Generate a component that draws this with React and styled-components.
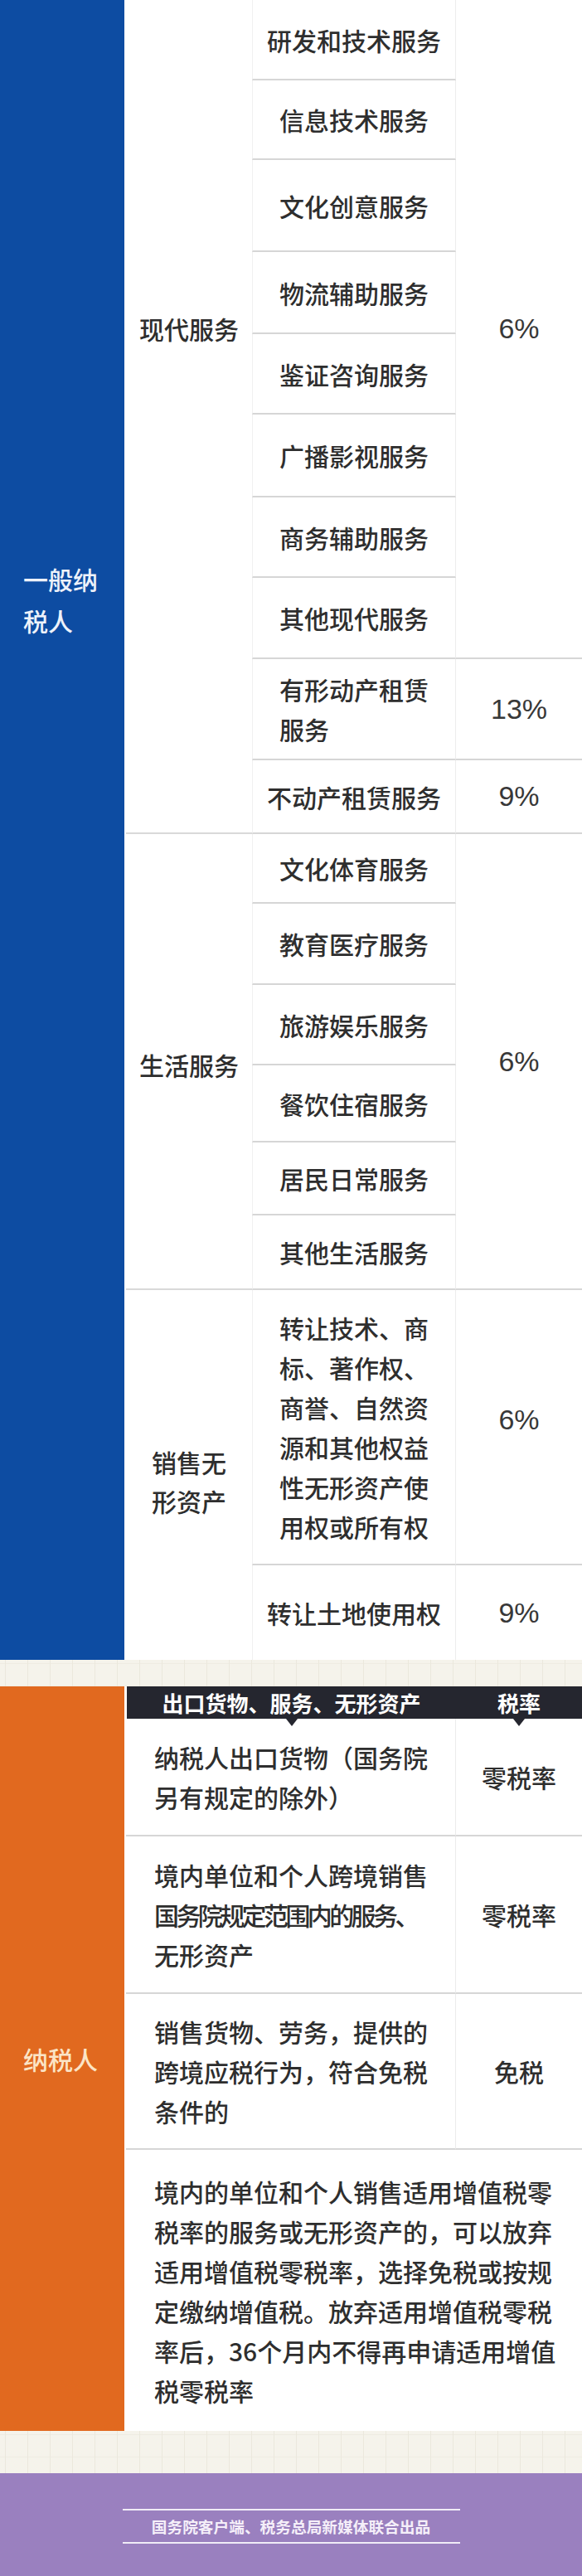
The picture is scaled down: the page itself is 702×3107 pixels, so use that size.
import React from 'react';
import styled, { createGlobalStyle } from 'styled-components';

const GlobalStyle = createGlobalStyle`
  *, *::before, *::after { box-sizing: border-box; }
  html, body { margin: 0; padding: 0; background: #ffffff; }
  body {
    font-family: "Noto Sans CJK SC", "Noto Sans", sans-serif;
    font-weight: 500;
    color: #2e2e2e;
  }
`;

const Page = styled.div`
  width: 702px;
  display: flex;
  flex-direction: column;
  background: #ffffff;
`;

const Table = styled.section`
  display: grid;
  grid-template-columns: ${(p) => p.$cols};
  grid-template-rows: ${(p) => p.$rows};
`;

const SideBand = styled.div`
  grid-column: 1;
  grid-row: 1 / -1;
  background: ${(p) => p.$bg};
  color: ${(p) => p.$fg};
  display: flex;
  flex-direction: column;
  justify-content: ${(p) => (p.$top != null ? 'flex-start' : 'center')};
  padding-top: ${(p) => p.$top || 0}px;
  padding-left: 28px;
  font-size: 30px;
  line-height: 50px;
`;

const Category = styled.div`
  grid-column: 2;
  grid-row: ${(p) => p.$span};
  display: flex;
  align-items: center;
  justify-content: center;
  text-align: center;
  padding-top: ${(p) => (p.$offset > 0 ? p.$offset * 2 : 0)}px;
  padding-bottom: ${(p) => (p.$offset < 0 ? -p.$offset * 2 : 0)}px;
  font-size: 30px;
  line-height: 47px;
  border-bottom: ${(p) => (p.$last ? 'none' : '2px solid #d9d9d9')};
  margin-left: 2px;
`;

const Item = styled.div`
  grid-column: 3;
  grid-row: ${(p) => p.$row};
  display: flex;
  align-items: center;
  justify-content: center;
  text-align: left;
  white-space: nowrap;
  font-size: 30px;
  line-height: 48px;
  border-left: 1px solid #f0f0f0;
  border-right: 1px solid #ededed;
  border-bottom: ${(p) => (p.$last ? 'none' : '2px solid #d6d6d6')};
`;

const Rate = styled.div`
  grid-column: 4;
  grid-row: ${(p) => p.$span};
  display: flex;
  align-items: center;
  justify-content: center;
  padding-bottom: ${(p) => (p.$offset < 0 ? -p.$offset * 2 : 0)}px;
  font-family: "Liberation Sans", Arial, sans-serif;
  font-weight: 400;
  font-size: 34px;
  color: #383838;
  border-bottom: ${(p) => (p.$last ? 'none' : '2px solid #d6d6d6')};
`;

const Paper = styled.div`
  height: ${(p) => p.$h}px;
  background-color: #f5f3eb;
  background-image:
    linear-gradient(90deg, #ebe8dd 1px, transparent 1px),
    linear-gradient(#efece2 1px, transparent 1px);
  background-size: 27px 27px;
  background-position: 6px 4px;
`;

const HeaderBar = styled.div`
  grid-column: 2 / 4;
  grid-row: 1;
  margin-left: 3px;
  background: #25262f;
  display: grid;
  grid-template-columns: 397px 1fr;
`;

const HeaderCell = styled.div`
  position: relative;
  display: flex;
  align-items: center;
  justify-content: center;
  color: #ffffff;
  font-size: 26px;
  font-weight: 700;
  line-height: 1;

  &::after {
    content: '';
    position: absolute;
    top: 100%;
    left: 50%;
    transform: translateX(-50%);
    border-left: 7px solid transparent;
    border-right: 7px solid transparent;
    border-top: 9px solid #25262f;
    z-index: 1;
  }
`;

const Desc = styled.div`
  grid-column: ${(p) => (p.$wide ? '2 / 4' : '2')};
  grid-row: ${(p) => p.$row};
  display: flex;
  align-items: center;
  padding-left: 34px;
  margin-left: 2px;
  white-space: nowrap;
  font-size: 30px;
  line-height: 48px;
  border-right: ${(p) => (p.$wide ? 'none' : '1px solid #ececec')};
  border-bottom: ${(p) => (p.$last ? 'none' : '2px solid #d6d6d6')};
`;

const Squeeze = styled.span`
  letter-spacing: -3.6px;
`;

const ExRate = styled.div`
  grid-column: 3;
  grid-row: ${(p) => p.$row};
  display: flex;
  align-items: center;
  justify-content: center;
  font-size: 30px;
  border-bottom: ${(p) => (p.$last ? 'none' : '2px solid #d6d6d6')};
`;

const Footer = styled.footer`
  height: 124px;
  background: #9a80bf;
  display: flex;
  justify-content: center;
  padding-top: 43px;
`;

const Credit = styled.div`
  width: 407px;
  height: 42px;
  border-top: 2px solid rgba(255, 255, 255, 0.85);
  border-bottom: 2px solid rgba(255, 255, 255, 0.85);
  display: flex;
  align-items: center;
  justify-content: center;
  color: #f5eff9;
  font-size: 18.7px;
  font-weight: 700;
  line-height: 1;
`;

const items = [
  { h: 97, lines: ['研发和技术服务'] },
  { h: 96, lines: ['信息技术服务'] },
  { h: 111, lines: ['文化创意服务'] },
  { h: 99, lines: ['物流辅助服务'] },
  { h: 97, lines: ['鉴证咨询服务'] },
  { h: 100, lines: ['广播影视服务'] },
  { h: 97, lines: ['商务辅助服务'] },
  { h: 98, lines: ['其他现代服务'] },
  { h: 122, lines: ['有形动产租赁', '服务'] },
  { h: 89, lines: ['不动产租赁服务'] },
  { h: 84, lines: ['文化体育服务'] },
  { h: 98, lines: ['教育医疗服务'] },
  { h: 97, lines: ['旅游娱乐服务'] },
  { h: 93, lines: ['餐饮住宿服务'] },
  { h: 88, lines: ['居民日常服务'] },
  { h: 90, lines: ['其他生活服务'] },
  {
    h: 332,
    lines: ['转让技术、商', '标、著作权、', '商誉、自然资', '源和其他权益', '性无形资产使', '用权或所有权'],
  },
  { h: 114, lines: ['转让土地使用权'] },
];

const categories = [
  { span: '1 / 11', lines: ['现代服务'], offset: -106 },
  { span: '11 / 17', lines: ['生活服务'], offset: 4 },
  { span: '17 / 19', lines: ['销售无', '形资产'], offset: 8, last: true },
];

const rates = [
  { span: '1 / 9', text: '6%' },
  { span: '9 / 10', text: '13%' },
  { span: '10 / 11', text: '9%' },
  { span: '11 / 17', text: '6%' },
  { span: '17 / 18', text: '6%', offset: -9 },
  { span: '18 / 19', text: '9%', last: true },
];

const Lines = ({ lines }) => (
  <div>
    {lines.map((l, i) => (
      <React.Fragment key={i}>
        {i > 0 && <br />}
        {l}
      </React.Fragment>
    ))}
  </div>
);

export default function App() {
  const rowTemplate = items.map((it) => `${it.h}px`).join(' ');
  return (
    <Page>
      <GlobalStyle />
      <Table $cols="150px 154px 246px 152px" $rows={rowTemplate}>
        <SideBand $bg="#0d4ca2" $fg="#eef2fa" $top={673}>
          <Lines lines={['一般纳', '税人']} />
        </SideBand>
        {categories.map((c) => (
          <Category key={c.span} $span={c.span} $offset={c.offset} $last={c.last}>
            <Lines lines={c.lines} />
          </Category>
        ))}
        {items.map((it, i) => (
          <Item key={i} $row={i + 1} $last={i === items.length - 1}>
            <Lines lines={it.lines} />
          </Item>
        ))}
        {rates.map((r) => (
          <Rate key={r.span} $span={r.span} $offset={r.offset || 0} $last={r.last}>
            {r.text}
          </Rate>
        ))}
      </Table>

      <Paper $h={32} />

      <Table $cols="150px 400px 152px" $rows="39px 142px 190px 188px 339px">
        <SideBand $bg="#e1691f" $fg="#fbe4c6">
          <div>纳税人</div>
        </SideBand>
        <HeaderBar>
          <HeaderCell>出口货物、服务、无形资产</HeaderCell>
          <HeaderCell>税率</HeaderCell>
        </HeaderBar>

        <Desc $row={2}>
          <div>
            纳税人出口货物（国务院
            <br />
            另有规定的除外）
          </div>
        </Desc>
        <ExRate $row={2}>零税率</ExRate>

        <Desc $row={3}>
          <div>
            境内单位和个人跨境销售
            <br />
            <Squeeze>国务院规定范围内的服务、</Squeeze>
            <br />
            无形资产
          </div>
        </Desc>
        <ExRate $row={3}>零税率</ExRate>

        <Desc $row={4}>
          <Lines lines={['销售货物、劳务，提供的', '跨境应税行为，符合免税', '条件的']} />
        </Desc>
        <ExRate $row={4}>免税</ExRate>

        <Desc $row={5} $wide $last>
          <Lines
            lines={[
              '境内的单位和个人销售适用增值税零',
              '税率的服务或无形资产的，可以放弃',
              '适用增值税零税率，选择免税或按规',
              '定缴纳增值税。放弃适用增值税零税',
              '率后，36个月内不得再申请适用增值',
              '税零税率',
            ]}
          />
        </Desc>
      </Table>

      <Paper $h={51} />

      <Footer>
        <Credit>国务院客户端、税务总局新媒体联合出品</Credit>
      </Footer>
    </Page>
  );
}
